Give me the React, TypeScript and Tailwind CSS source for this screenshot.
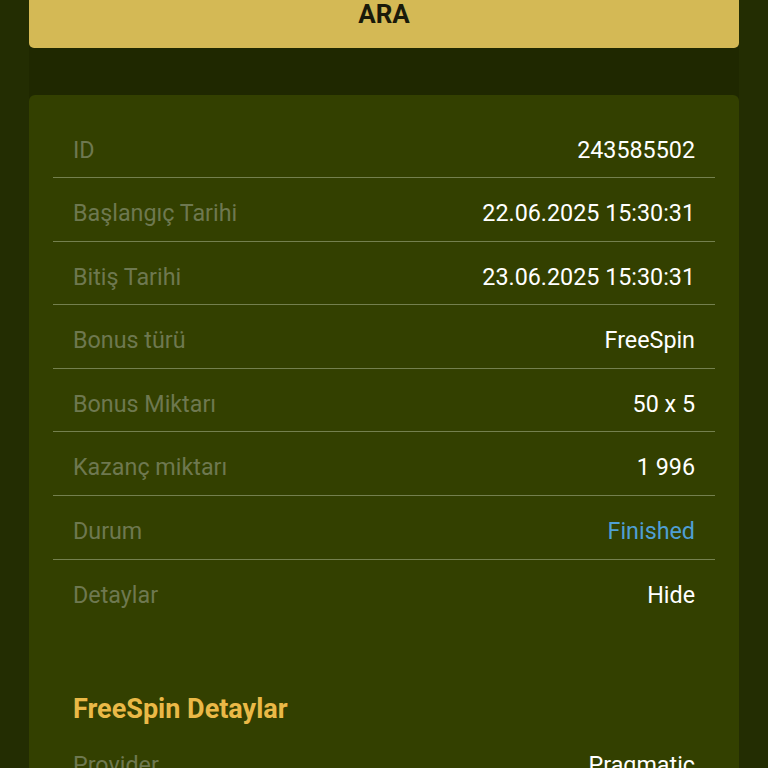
import React from 'react';

const rows: { label: string; value: string; tone?: 'link' }[] = [
  { label: 'ID', value: '243585502' },
  { label: 'Başlangıç Tarihi', value: '22.06.2025 15:30:31' },
  { label: 'Bitiş Tarihi', value: '23.06.2025 15:30:31' },
  { label: 'Bonus türü', value: 'FreeSpin' },
  { label: 'Bonus Miktarı', value: '50 x 5' },
  { label: 'Kazanç miktarı', value: '1 996' },
  { label: 'Durum', value: 'Finished', tone: 'link' },
  { label: 'Detaylar', value: 'Hide' },
];

export default function App() {
  return (
    <div
      className="min-h-screen h-[768px] overflow-hidden bg-[#232d02]"
      style={{ fontFamily: 'Roboto, "Noto Sans", sans-serif' }}
    >
      <div className="mx-[29px] bg-[#1f2800]">
        <button className="w-full h-[48px] flex justify-center items-start bg-[#d4b955] rounded-b-[5px] text-[26px] font-bold text-[#1a1a0a] leading-[28px]">
          ARA
        </button>

        <div className="mt-[47px] bg-[#334000] rounded-[6px] px-[24px] pt-[19.5px] pb-[40px]">
          {rows.map((row, i) => (
            <div
              key={row.label}
              className={`flex justify-between px-[20px] pt-[22px] pb-[13.6px] text-[23.3px] leading-[27px] ${
                i < rows.length - 1 ? 'border-b border-[#74804e]' : ''
              }`}
            >
              <span className="text-[#6e7850]">{row.label}</span>
              <span className={row.tone === 'link' ? 'text-[#4f9fd4]' : 'text-white'}>{row.value}</span>
            </div>
          ))}

          <h2 className="mt-[71px] px-[20px] text-[27px] leading-[32px] font-bold text-[#eab947]">
            FreeSpin Detaylar
          </h2>

          <div className="flex justify-between px-[20px] pt-[27px] pb-[13.5px] text-[23.3px] leading-[27px]">
            <span className="text-[#6e7850]">Provider</span>
            <span className="text-white">Pragmatic</span>
          </div>
        </div>
      </div>
    </div>
  );
}
